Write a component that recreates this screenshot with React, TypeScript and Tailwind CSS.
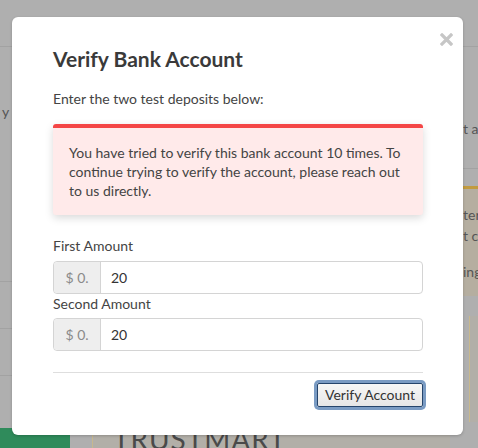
export default function App() {
  return (
    <div className="relative h-[448px] w-[478px] overflow-hidden bg-[#afafaf] font-['Lato',sans-serif] text-[14px] text-[#555]">
      {/* page behind the backdrop */}
      <div className="flex h-full flex-col">
        <div className="h-[47px] shrink-0 border-b border-[#a2a2a2]" />
        <div className="flex flex-1">
          <aside className="flex w-[70px] shrink-0 flex-col">
            <div className="h-[188px] pl-[2px] pt-[54px]">
              <span>y</span>
            </div>
            <div className="h-[47px] border-b border-[#a2a2a2]" />
            <div className="h-[47px] border-b border-[#a2a2a2]" />
            <div className="h-[47px] border-b border-[#a2a2a2]" />
            <div className="mt-auto h-[20px] bg-[#2f8b5b]" />
          </aside>
          <main className="flex flex-1 flex-col">
            <div className="flex flex-1">
              <div className="flex-1" />
              <div className="flex w-[30px] flex-col pl-[15px]">
                <div className="h-[122px] border-b border-[#a2a2a2] pt-[71px] whitespace-nowrap">t a</div>
                <div className="mt-[17px] h-[110px] border-t-[3px] border-[#c29b3f] bg-[#b5aea0] pt-[15px] leading-[21px] whitespace-nowrap">
                  <div>ter</div>
                  <div>t c</div>
                  <div className="mt-[15px]">ing</div>
                </div>
                <div className="ml-[6px] mt-[20px] flex-1 border-l border-[#c7b88d] bg-[#b2afa8]" />
              </div>
            </div>
            <div className="ml-[22px] mr-[28px] h-[26px] border-l border-t border-[#c7b88d] bg-[#b2afa8] pl-[20px] pt-[2px] text-[28px] leading-[28px] text-[#4a4a4a] tracking-[1px]">
              TRUSTMART
            </div>
          </main>
        </div>
      </div>

      {/* modal */}
      <div className="absolute left-[12px] top-[17px] w-[451px] rounded-[6px] bg-white pb-[28px] pl-[41px] pr-[40px] pt-[28px] shadow-[0_1px_3px_rgba(0,0,0,0.2)]">
        <button className="absolute right-[10px] top-[16px] text-[#c6c6c6]" aria-label="Close">
          <svg width="13" height="13" viewBox="0 0 13 13">
            <path d="M2 2 L11 11 M11 2 L2 11" stroke="currentColor" strokeWidth="3.2" strokeLinecap="square" />
          </svg>
        </button>
        <h2 className="text-[21px] font-bold leading-[28px] text-[#3a3a3a]">Verify Bank Account</h2>
        <p className="mt-[16px] leading-[20px] text-[#444]">Enter the two test deposits below:</p>

        <div className="mt-[15px] rounded-[3px] border-t-[4px] border-[#f44646] bg-[#ffeaea] px-[16px] py-[15px] leading-[19px] text-[#444] shadow-[0_3px_8px_rgba(0,0,0,0.15)]">
          You have tried to verify this bank account 10 times. To continue trying to verify the account, please reach out to us directly.
        </div>

        <label className="mt-[21px] block leading-[20px] text-[#444]">First Amount</label>
        <div className="mt-[5px] flex h-[33px] rounded-[4px] border border-[#d4d4d4]">
          <span className="flex w-[47px] items-center justify-center rounded-l-[4px] border-r border-[#d4d4d4] bg-[#eeeeee] text-[#8a8a8a]">$ 0.</span>
          <span className="flex items-center pl-[10px] text-[#333]">20</span>
        </div>

        <label className="block leading-[20px] text-[#444]">Second Amount</label>
        <div className="mt-[4px] flex h-[33px] rounded-[4px] border border-[#d4d4d4]">
          <span className="flex w-[47px] items-center justify-center rounded-l-[4px] border-r border-[#d4d4d4] bg-[#eeeeee] text-[#8a8a8a]">$ 0.</span>
          <span className="flex items-center pl-[10px] text-[#333]">20</span>
        </div>

        <hr className="mt-[21px] border-[#dedede]" />

        <div className="mt-[10px] flex justify-end">
          <button className="h-[24px] w-[106px] rounded-[2px] border border-[#26456c] bg-[linear-gradient(#f7f7f7,#e6e6e6)] text-[14px] leading-[20px] text-[#333] shadow-[0_0_0_3px_#7a9bc3]">
            Verify Account
          </button>
        </div>
      </div>
    </div>
  )
}
